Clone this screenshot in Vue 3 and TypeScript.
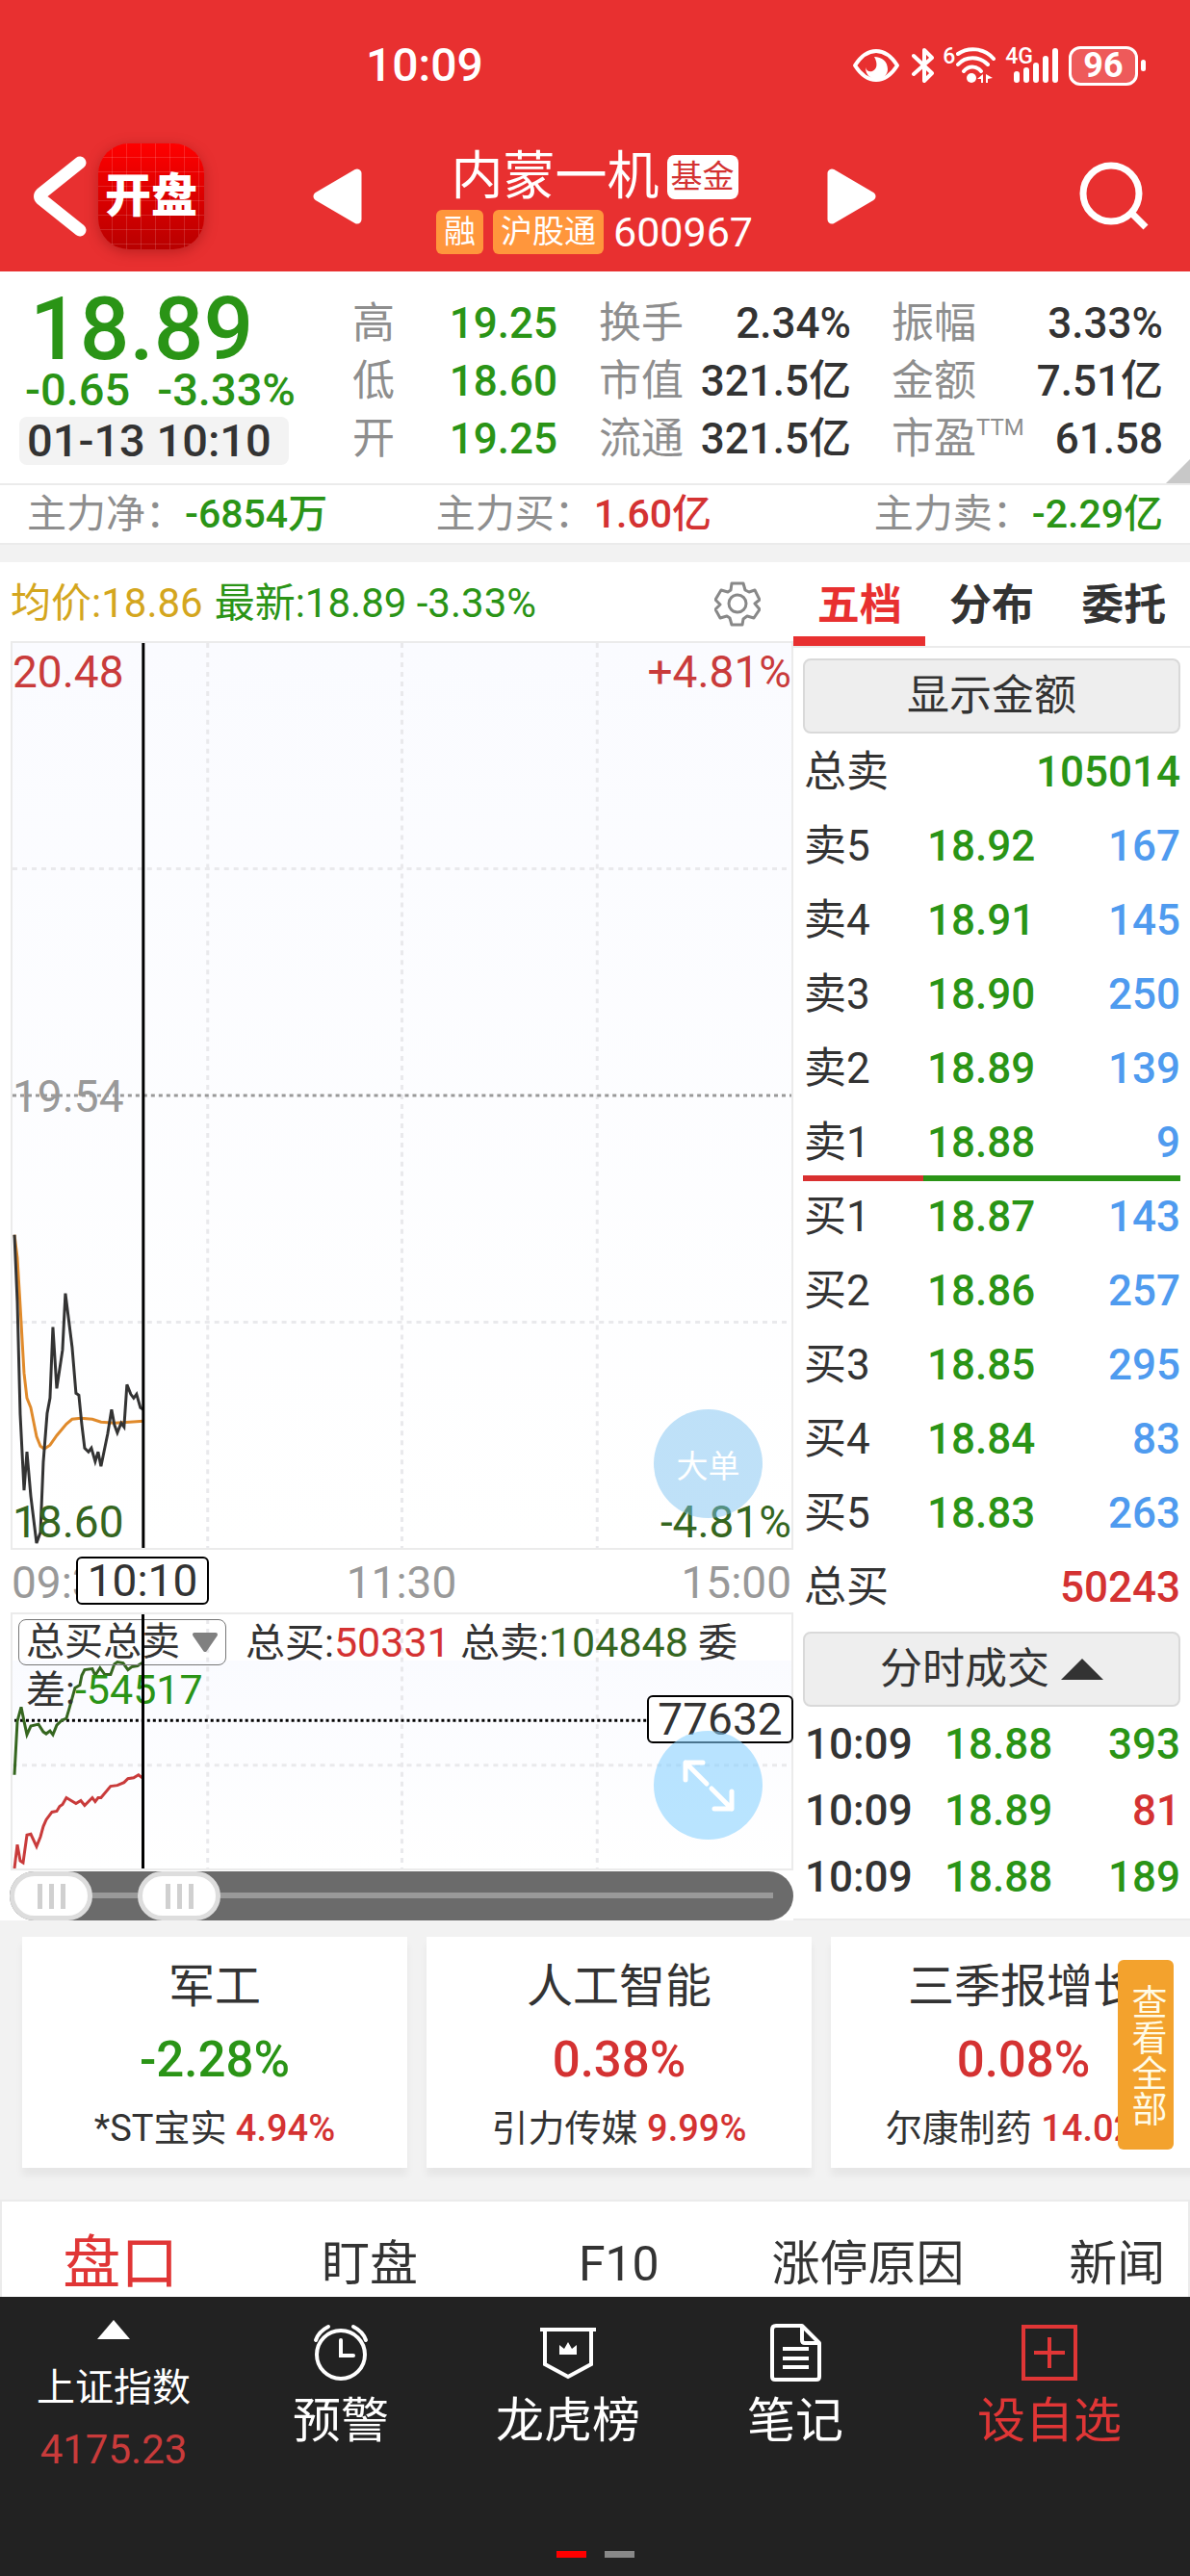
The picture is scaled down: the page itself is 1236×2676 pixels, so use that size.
<script setup lang="ts">
import { ref } from 'vue'

type Tone = 'up' | 'down' | 'blue' | 'dark'
interface Level { name: string; price: string; qty: string }
interface Trade { time: string; price: string; qty: string; tone: Tone }
interface Sector { name: string; change: string; tone: Tone; stock: string; stockChange: string }

const sells: Level[] = [
  { name: '卖5', price: '18.92', qty: '167' },
  { name: '卖4', price: '18.91', qty: '145' },
  { name: '卖3', price: '18.90', qty: '250' },
  { name: '卖2', price: '18.89', qty: '139' },
  { name: '卖1', price: '18.88', qty: '9' },
]
const buys: Level[] = [
  { name: '买1', price: '18.87', qty: '143' },
  { name: '买2', price: '18.86', qty: '257' },
  { name: '买3', price: '18.85', qty: '295' },
  { name: '买4', price: '18.84', qty: '83' },
  { name: '买5', price: '18.83', qty: '263' },
]
const trades: Trade[] = [
  { time: '10:09', price: '18.88', qty: '393', tone: 'down' },
  { time: '10:09', price: '18.89', qty: '81', tone: 'up' },
  { time: '10:09', price: '18.88', qty: '189', tone: 'down' },
]
const sectors: Sector[] = [
  { name: '军工', change: '-2.28%', tone: 'down', stock: '*ST宝实', stockChange: '4.94%' },
  { name: '人工智能', change: '0.38%', tone: 'up', stock: '引力传媒', stockChange: '9.99%' },
  { name: '三季报增长', change: '0.08%', tone: 'up', stock: '尔康制药', stockChange: '14.02%' },
]
const bookTabs = ['五档', '分布', '委托']
const activeBook = ref('五档')
const infoTabs = ['盘口', '盯盘', 'F10', '涨停原因', '新闻']
const activeInfo = ref('盘口')
const rangeStart = ref(0)
const rangeEnd = ref(44)

const priceLine =
  '2,616 5,686 8,803 12,882 15,842 19,888 25,937 29,926 32,853 36,802 39,786 42,712 46,776 52,736 55,677 62,733 66,781 69,783 72,813 75,838 79,842 82,838 86,852 89,842 92,857 99,823 103,798 106,814 109,822 113,812 116,816 119,772 123,782 126,786 129,782 133,796 136,798'
const averageLine =
  '2,616 5,640 8,690 12,760 15,786 19,796 25,826 29,836 33,839 39,835 46,825 56,813 62,808 71,807 83,808 92,811 106,812 122,811 136,810'
const askLine =
  '2,168 5,112 9,97 12,112 15,126 19,117 27,115 32,123 35,125 39,122 42,126 46,116 51,111 56,109 60,95 65,77 70,74 72,64 75,58 83,57 86,64 91,56 96,63 102,63 106,52 109,50 115,51 120,58 124,55 130,54 136,50'
const bidLine =
  '2,266 5,241 8,258 11,260 15,231 19,230 25,243 29,233 32,222 35,215 41,207 46,206 49,201 52,199 56,192 66,198 71,195 75,200 83,192 86,196 89,192 92,192 102,180 109,179 116,176 120,172 126,171 131,168 136,172'
</script>

<template>
  <div class="page">
    <header class="top">
      <div class="status">
        <time class="clock">10:09</time>
        <div class="status-icons">
          <svg class="eye" viewBox="0 0 50 36" width="50" height="36" aria-hidden="true">
            <path d="M3 18C10 7 17 3 25 3s15 4 22 15C40 29 33 33 25 33S10 29 3 18z" fill="none" stroke="#fff" stroke-width="4" stroke-linejoin="round" />
            <path d="M23 9c8 0 14 5 14 13 0 6-5 10-11 10-7 0-12-4-12-12 1 4 4 5 7 4 5-2 6-8 2-15z" fill="#fff" />
          </svg>
          <svg class="bt" viewBox="0 0 24 38" width="24" height="38" aria-hidden="true">
            <path d="M2 9l19 18-8 8V3l8 8L2 28" fill="none" stroke="#fff" stroke-width="4" stroke-linejoin="round" stroke-linecap="round" />
          </svg>
          <span class="net">6</span>
          <svg class="wifi" viewBox="0 0 42 38" width="42" height="38" aria-hidden="true">
            <g fill="none" stroke="#fff" stroke-width="4" stroke-linecap="round">
              <path d="M3 7c10-7 27-7 37 5" />
              <path d="M3 18c8-9 22-9 31 0" />
              <path d="M9 25c5-6 13-6 18 0" />
            </g>
            <circle cx="17" cy="32" r="5" fill="#fff" />
            <path d="M23 33l6-5v9h-2v-4zM32 28l7 4-5 1v4h-2z" fill="#fff" />
          </svg>
          <span class="net four">4G</span>
          <svg class="bars" viewBox="0 0 50 38" width="50" height="38" aria-hidden="true">
            <path d="M5 28v6M15 24v10M25 19v15M35 12v22M45 4v30" stroke="#fff" stroke-width="6" stroke-linecap="round" />
          </svg>
          <span class="battery">96</span>
          <i class="nub"></i>
        </div>
      </div>
      <div class="nav">
        <button class="plain back" aria-label="返回">
          <svg viewBox="0 0 56 84" width="56" height="84"><path d="M49 7L9 39q-3 3 0 6l40 32" fill="none" stroke="#fff" stroke-width="13" stroke-linecap="round" stroke-linejoin="round" /></svg>
        </button>
        <div class="logo">开盘</div>
        <button class="plain prev" aria-label="上一只">
          <svg viewBox="0 0 52 58" width="52" height="58"><path d="M46 5v48L5 29z" fill="#fff" stroke="#fff" stroke-width="9" stroke-linejoin="round" /></svg>
        </button>
        <div class="title">
          <h1>内蒙一机<span class="fund">基金</span></h1>
          <p><span class="tag">融</span><span class="tag">沪股通</span><span class="code">600967</span></p>
        </div>
        <button class="plain next" aria-label="下一只">
          <svg viewBox="0 0 52 58" width="52" height="58"><path d="M6 5v48l41-24z" fill="#fff" stroke="#fff" stroke-width="9" stroke-linejoin="round" /></svg>
        </button>
        <button class="plain search" aria-label="搜索">
          <svg viewBox="0 0 74 74" width="74" height="74"><circle cx="34" cy="34" r="29" fill="none" stroke="#fff" stroke-width="7" /><path d="M56 55l14 14" stroke="#fff" stroke-width="7" /></svg>
        </button>
      </div>
    </header>

    <section class="quote">
      <div class="last">
        <div class="big">18.89</div>
        <div class="delta"><span>-0.65</span><span>-3.33%</span></div>
        <div class="stamp">01-13 10:10</div>
      </div>
      <dl class="c1">
        <div><dt>高</dt><dd class="down">19.25</dd></div>
        <div><dt>低</dt><dd class="down">18.60</dd></div>
        <div><dt>开</dt><dd class="down">19.25</dd></div>
      </dl>
      <dl class="c2">
        <div><dt>换手</dt><dd>2.34%</dd></div>
        <div><dt>市值</dt><dd>321.5亿</dd></div>
        <div><dt>流通</dt><dd>321.5亿</dd></div>
      </dl>
      <dl class="c3">
        <div><dt>振幅</dt><dd>3.33%</dd></div>
        <div><dt>金额</dt><dd>7.51亿</dd></div>
        <div><dt class="pe">市盈<small>TTM</small></dt><dd>61.58</dd></div>
      </dl>
    </section>

    <section class="flow">
      <p><span>主力净：</span><b class="down">-6854万</b></p>
      <p><span>主力买：</span><b class="up">1.60亿</b></p>
      <p><span>主力卖：</span><b class="down">-2.29亿</b></p>
    </section>

    <main class="main">
      <section class="left">
        <div class="legend">
          <span class="avg">均价:18.86</span>
          <span class="new">最新:18.89 -3.33%</span>
          <button class="plain gear" aria-label="设置">
            <svg viewBox="0 0 48 48" width="48" height="48" fill="none" stroke="#888" stroke-width="3" stroke-linejoin="round">
              <path d="M18 3h12l2 7 4 2 6-2 5 10-5 4 5 6-6 9-7-2-4 3-1 6H18l-2-7-3-2-7 2-5-9 5-5-5-5 6-10 7 2 3-2z" />
              <circle cx="24" cy="24" r="9" />
            </svg>
          </button>
        </div>

        <div class="chart">
          <svg viewBox="0 0 810 942" preserveAspectRatio="none">
            <g stroke="#e9e9ec" stroke-width="3" stroke-dasharray="5 5">
              <path d="M203 0v942M405 0v942M608 0v942M0 235h810M0 707h810" />
            </g>
            <path d="M0 471h810" stroke="#999" stroke-width="3" stroke-dasharray="4 4" />
            <polyline :points="averageLine" fill="none" stroke="#e08a2b" stroke-width="3" />
            <polyline :points="priceLine" fill="none" stroke="#333" stroke-width="3" />
            <path d="M136 0v942" stroke="#000" stroke-width="3" />
          </svg>
          <span class="lab tl">20.48</span>
          <span class="lab tr">+4.81%</span>
          <span class="lab ml">19.54</span>
          <span class="lab bl">18.60</span>
          <span class="lab br">-4.81%</span>
          <button class="bubble big-order">大单</button>
        </div>

        <div class="axis">
          <span>09:30</span><span>11:30</span><span>15:00</span>
          <span class="cursor">10:10</span>
        </div>

        <div class="chart volume">
          <svg viewBox="0 0 810 266" preserveAspectRatio="none">
            <g stroke="#e9e9ec" stroke-width="3" stroke-dasharray="5 5">
              <path d="M203 5v261M405 5v261M608 5v261M0 158h810" />
            </g>
            <path d="M2 111h657" stroke="#000" stroke-width="3" stroke-dasharray="3 3" />
            <polyline :points="askLine" fill="none" stroke="#35661f" stroke-width="3" />
            <polyline :points="bidLine" fill="none" stroke="#c93b3b" stroke-width="3" />
          </svg>
          <div class="stats">
            <button class="picker">总买总卖<svg viewBox="0 0 28 22" width="28" height="22"><path d="M3 3h22L14 19z" fill="#808080" stroke="#808080" stroke-width="4" stroke-linejoin="round" /></svg></button>
            <span>总买:<em class="up">50331</em> 总卖:<em class="deep">104848</em> 委</span>
            <div class="diff">差:<em class="down">-54517</em></div>
          </div>
          <i class="cross"></i>
          <span class="value">77632</span>
          <button class="bubble expand" aria-label="展开">
            <svg viewBox="0 0 56 56" width="56" height="56" fill="none" stroke="#fff" stroke-width="5" stroke-linecap="round" stroke-linejoin="round">
              <path d="M26 26L4 4M4 22V4h18M31 31l21 21M52 34v18H34" />
            </svg>
          </button>
        </div>

        <div class="slider">
          <input v-model.number="rangeStart" type="range" min="0" max="240" aria-label="开始时间" />
          <input v-model.number="rangeEnd" type="range" min="0" max="240" aria-label="结束时间" />
        </div>
      </section>

      <section class="book">
        <nav class="book-tabs">
          <button v-for="t in bookTabs" :key="t" class="plain" :class="{ on: t === activeBook }" @click="activeBook = t">{{ t }}</button>
        </nav>
        <div class="book-body">
          <button class="grey">显示金额</button>
          <table>
            <colgroup><col class="col-name" /><col /><col class="col-qty" /></colgroup>
            <tbody>
              <tr><th>总卖</th><td colspan="2" class="down">105014</td></tr>
              <tr v-for="l in sells" :key="l.name"><th>{{ l.name }}</th><td class="down price">{{ l.price }}</td><td class="blue">{{ l.qty }}</td></tr>
            </tbody>
          </table>
          <div class="ratio"></div>
          <table>
            <colgroup><col class="col-name" /><col /><col class="col-qty" /></colgroup>
            <tbody>
              <tr v-for="l in buys" :key="l.name"><th>{{ l.name }}</th><td class="down price">{{ l.price }}</td><td class="blue">{{ l.qty }}</td></tr>
              <tr><th>总买</th><td colspan="2" class="up">50243</td></tr>
            </tbody>
          </table>
          <button class="grey ticks">分时成交<svg viewBox="0 0 44 22" width="44" height="22"><path d="M22 0l22 22H0z" fill="#333" /></svg></button>
          <table class="trades">
            <tbody>
              <tr v-for="(t, i) in trades" :key="i"><td class="time">{{ t.time }}</td><td class="down price">{{ t.price }}</td><td :class="t.tone">{{ t.qty }}</td></tr>
            </tbody>
          </table>
        </div>
      </section>
    </main>

    <section class="sectors">
      <article v-for="s in sectors" :key="s.name" class="card">
        <h2>{{ s.name }}</h2>
        <strong :class="s.tone">{{ s.change }}</strong>
        <p>{{ s.stock }} <b class="up">{{ s.stockChange }}</b></p>
      </article>
      <button class="all">查看全部</button>
    </section>

    <nav class="info-tabs">
      <button v-for="t in infoTabs" :key="t" class="plain" :class="{ on: t === activeInfo }" @click="activeInfo = t">{{ t }}</button>
    </nav>

    <footer class="bottom">
      <div class="tools">
        <button class="plain index">
          <svg viewBox="0 0 34 20" width="34" height="20"><path d="M17 0l17 20H0z" fill="#fff" /></svg>
          <span>上证指数</span>
          <span class="points">4175.23</span>
        </button>
        <button class="plain tool">
          <svg viewBox="0 0 60 60" width="60" height="60" fill="none" stroke="#fff" stroke-width="4" stroke-linecap="round">
            <circle cx="30" cy="32" r="25" /><path d="M30 17v16h13" /><path d="M4 17c2-6 7-11 13-14M56 17c-2-6-7-11-13-14" />
          </svg>
          <span>预警</span>
        </button>
        <button class="plain tool">
          <svg viewBox="0 0 60 60" width="60" height="60" fill="none" stroke="#fff" stroke-width="4">
            <path d="M1 6h58M6 6v36l24 13 24-13V6" /><path d="M21 32V22l5 4 4-7 4 7 5-4v10z" fill="#fff" stroke="none" />
          </svg>
          <span>龙虎榜</span>
        </button>
        <button class="plain tool">
          <svg viewBox="0 0 60 60" width="60" height="60" fill="none" stroke="#fff" stroke-width="4" stroke-linejoin="round">
            <path d="M10 2h27l18 18v35q0 3-3 3H9q-3 0-3-3V6q0-4 4-4z" /><path d="M37 3v14q0 3 3 3h14M17 26h27M17 36h27M17 45h27" />
          </svg>
          <span>笔记</span>
        </button>
        <button class="plain tool add">
          <svg viewBox="0 0 60 60" width="60" height="60" fill="none" stroke="#e03636" stroke-width="4">
            <path d="M3 3h54v54H3zM14 30h32M30 14v32" />
          </svg>
          <span>设自选</span>
        </button>
      </div>
      <div class="dots"><i class="on"></i><i></i></div>
    </footer>
  </div>
</template>

<style>
html,
body {
  background: #222;
}
</style>

<style scoped>
.page {
  overflow: hidden;
  background: #fff;
  color: #333;
  font-family: Roboto, "Noto Sans CJK SC", sans-serif;
  font-size: 44px;
  line-height: 60px;
}
.page *,
.page *::before,
.page *::after {
  box-sizing: border-box;
}
button {
  font-family: inherit;
  color: inherit;
  cursor: pointer;
}
.plain {
  padding: 0;
  border: 0;
  background: none;
  font-size: inherit;
  line-height: inherit;
}
svg {
  display: block;
}
h1, h2, p, dl, dd {
  margin: 0;
}
b, em, strong {
  font-weight: 500;
  font-style: normal;
}
.up { color: #d43232; }
.down { color: #2a9416; }
.deep { color: #35661f; }
.blue { color: #4f9bef; }

/* header */
.top {
  background: #e83030;
  color: #fff;
}
.status {
  display: flex;
  justify-content: space-between;
  align-items: center;
  padding: 38px 46px 0 380px;
}
.clock {
  font-size: 48px;
  font-weight: 500;
}
.status-icons {
  display: flex;
  align-items: center;
}
.bt { margin: 0 8px 0 12px; }
.net {
  align-self: flex-start;
  font-size: 23px;
  font-weight: 500;
  line-height: 22px;
}
.four { margin: 0 -22px 0 10px; }
.battery {
  width: 72px;
  margin-left: 9px;
  border: 3px solid #fff;
  border-radius: 12px;
  background: #ee5a5a;
  font-size: 36px;
  font-weight: 700;
  line-height: 35px;
  text-align: center;
}
.nub {
  width: 5px;
  height: 12px;
  margin-left: 3px;
  border-radius: 3px;
  background: #fff;
}
.nav {
  display: flex;
  align-items: center;
  padding: 45px 42px 17px 34px;
}
.logo {
  width: 110px;
  margin-left: 12px;
  border-radius: 32px;
  background:
    repeating-linear-gradient(90deg, transparent 0 14px, rgba(255, 255, 255, .14) 14px 15px),
    repeating-linear-gradient(transparent 0 14px, rgba(255, 255, 255, .14) 14px 15px),
    linear-gradient(#f00, #b80000);
  box-shadow: 0 3px 14px rgba(100, 0, 0, .35);
  font-size: 48px;
  font-weight: 900;
  line-height: 110px;
  text-align: center;
}
.prev { margin-left: 113px; }
.title {
  display: flex;
  flex-direction: column;
  align-items: center;
  flex: 1;
  padding-top: 8px;
}
.next { margin-right: 210px; }
.title h1 {
  display: flex;
  align-items: center;
  gap: 8px;
  font-size: 54px;
  font-weight: 400;
  line-height: 66px;
}
.fund {
  padding: 0 4px;
  border-radius: 8px;
  background: #fff;
  color: #d43232;
  font-size: 33px;
  line-height: 46px;
}
.title p {
  display: flex;
  align-items: center;
  line-height: 48px;
}
.tag {
  margin-right: 10px;
  padding: 0 8px;
  border-radius: 6px;
  background: #ff963c;
  font-size: 33px;
  line-height: 46px;
}
.code { font-size: 43px; }

/* quote */
.quote {
  position: relative;
  display: grid;
  grid-template-columns: 366fr 256fr 304fr 310fr;
  padding-bottom: 16px;
  border-bottom: 2px solid #ebebeb;
}
.quote::after {
  content: "";
  position: absolute;
  right: 0;
  bottom: 0;
  width: 25px;
  height: 25px;
  background: #c8c8c8;
  clip-path: polygon(100% 0, 100% 100%, 0 100%);
}
.last {
  padding: 18px 0 0 20px;
}
.big {
  padding-left: 11px;
  color: #2a9416;
  font-size: 91px;
  font-weight: 500;
  line-height: 84px;
}
.delta {
  display: flex;
  gap: 28px;
  padding-left: 6px;
  color: #2a9416;
  font-size: 47px;
  font-weight: 500;
  line-height: 42px;
}
.stamp {
  width: 280px;
  margin-top: 7px;
  padding-left: 8px;
  border-radius: 8px;
  background: #f3f3f3;
  font-size: 47px;
  font-weight: 500;
  line-height: 50px;
  white-space: nowrap;
}
.quote dl {
  padding-top: 24px;
}
.quote dl > div {
  display: flex;
  justify-content: space-between;
  line-height: 60px;
}
.c1 { padding-right: 43px; }
.c2 { padding-right: 42px; }
.c3 { padding-right: 28px; }
dt { color: #8e8e8e; }
.pe {
  display: flex;
}
.pe small {
  font-size: 24px;
  line-height: 36px;
}
dd { font-weight: 500; white-space: nowrap; }

.flow {
  display: grid;
  grid-template-columns: 36% 1fr auto;
  padding: 0 28px;
  border-bottom: 2px solid #ebebeb;
  font-size: 41px;
  line-height: 60px;
}
.flow span { color: #8e8e8e; }

/* main */
.main {
  display: grid;
  grid-template-columns: 2fr 1fr;
  border-top: 18px solid #f2f2f2;
}
.legend {
  display: flex;
  gap: 12px;
  align-items: center;
  height: 82px;
  padding: 4px 34px 0 11px;
  font-size: 42px;
}
.avg { color: #d4a61e; }
.new { color: #2a9416; }
.gear { margin-left: auto; }
.chart {
  position: relative;
  height: 944px;
  margin: 0 0 0 11px;
  border: 2px solid #ebebeb;
  background: linear-gradient(#fafbff, #fff);
}
.chart > svg {
  width: 100%;
  height: 100%;
}
.lab {
  position: absolute;
  font-size: 46px;
}
.tl, .tr { top: 0; color: #c93b3b; }
.ml { top: 441px; left: 0; color: #999; }
.tl, .bl { left: 0; }
.tr, .br { right: 0; }
.bl, .br { bottom: -3px; color: #35661f; }
.bubble {
  position: absolute;
  right: 30px;
  display: flex;
  align-items: center;
  justify-content: center;
  width: 113px;
  height: 113px;
  padding: 0;
  border: 0;
  border-radius: 50%;
  color: #fff;
  font-size: 33px;
}
.big-order {
  bottom: 31px;
  background: rgba(120, 192, 240, .47);
}
.expand {
  bottom: 30px;
  background: rgba(130, 206, 255, .56);
}
.axis {
  position: relative;
  display: flex;
  justify-content: space-between;
  padding: 3px 2px 0 12px;
  color: #999;
  font-size: 46px;
  line-height: 62px;
}
.cursor,
.value {
  position: absolute;
  border: 2px solid #000;
  border-radius: 6px;
  background: #fff;
  color: #333;
  font-size: 46px;
  line-height: 46px;
  text-align: center;
}
.cursor {
  top: 7px;
  left: 79px;
  width: 138px;
}
.volume {
  height: 268px;
  background: linear-gradient(#fff 48px, #fafbff 48px, #fff);
}
.stats {
  position: absolute;
  top: 5px;
  left: 6px;
  right: 0;
  font-size: 41px;
  line-height: 48px;
  white-space: nowrap;
}
.stats em {
  font-size: 43px;
  font-weight: 400;
}
.picker {
  display: inline-flex;
  align-items: center;
  gap: 12px;
  margin-right: 20px;
  padding: 0 7px;
  border: 1px solid #777;
  border-radius: 8px;
  background: none;
  font-size: 40px;
  line-height: 46px;
  vertical-align: top;
}
.diff { padding-left: 8px; }
.cross {
  position: absolute;
  top: 0;
  bottom: 0;
  left: 134px;
  width: 3px;
  background: #000;
}
.value {
  top: 84px;
  right: -2px;
  width: 152px;
}
.slider {
  position: relative;
  height: 51px;
  margin: 1px 0 0 10px;
  border-radius: 26px;
  background: linear-gradient(#999, #999) 40px 22px / calc(100% - 61px) 6px no-repeat #6b6b6b;
}
.slider input {
  position: absolute;
  inset: 0;
  width: 100%;
  height: 51px;
  margin: 0;
  appearance: none;
  background: none;
  pointer-events: none;
}
.slider input::-webkit-slider-thumb {
  appearance: none;
  width: 86px;
  height: 51px;
  border: 5px solid #ddd;
  border-radius: 26px;
  background:
    linear-gradient(#d0d0d0, #d0d0d0) 24px 50% / 5px 26px no-repeat,
    linear-gradient(#d0d0d0, #d0d0d0) 36px 50% / 5px 26px no-repeat,
    linear-gradient(#d0d0d0, #d0d0d0) 48px 50% / 5px 26px no-repeat,
    #fff;
  pointer-events: auto;
}

/* order book */
.book {
  border-bottom: 2px solid #ebebeb;
}
.book-tabs {
  display: grid;
  grid-template-columns: repeat(3, 1fr);
  border-bottom: 2px solid #ebebeb;
}
.book-tabs button {
  padding-top: 14px;
  border-bottom: 10px solid transparent;
  font-weight: 700;
  line-height: 63px;
}
.book-tabs .on {
  border-color: #e83030;
  color: #e83030;
}
.book-body {
  padding: 11px 10px 0;
}
.grey {
  display: flex;
  align-items: center;
  justify-content: center;
  gap: 12px;
  width: 100%;
  padding: 0;
  border: 2px solid #d9d9d9;
  border-radius: 8px;
  background: #eee;
  font-size: 44px;
  line-height: 74px;
}
.ticks { margin: 9px 0 3px; }
table {
  width: 100%;
  border-collapse: collapse;
  table-layout: fixed;
}
th, td {
  height: 77px;
  padding: 2px 0 0;
  text-align: right;
  font-weight: 500;
}
.col-name { width: 129px; }
.col-qty { width: 110px; }
th {
  padding-left: 1px;
  text-align: left;
  font-weight: 400;
}
.price, .time {
  text-align: left;
}
.ratio {
  position: relative;
  height: 6px;
  margin: -3px 0;
  background: linear-gradient(90deg, #d93030 32%, #2a9416 32%);
}
.trades td { height: 69px; }
.trades .time { width: 147px; padding-left: 2px; }

/* sectors */
.sectors {
  position: relative;
  display: flex;
  gap: 20px;
  padding: 17px 0 33px 23px;
  background: #f2f2f2;
}
.card {
  flex: 0 0 400px;
  padding: 18px 0 12px;
  background: #fff;
  box-shadow: 0 8px 8px rgba(0, 0, 0, .05);
  text-align: center;
}
.card h2 {
  font-size: 48px;
  font-weight: 400;
  line-height: 68px;
}
.card strong {
  display: block;
  font-size: 51px;
  line-height: 84px;
}
.card p {
  font-size: 38px;
  line-height: 58px;
  white-space: nowrap;
}
.all {
  position: absolute;
  top: 41px;
  right: 17px;
  width: 58px;
  height: 197px;
  padding: 0;
  border: 0;
  border-radius: 6px;
  background: #f3a22d;
  color: #fffbe6;
  font-size: 37px;
  line-height: 58px;
  writing-mode: vertical-rl;
}
.info-tabs {
  display: grid;
  grid-template-columns: repeat(5, 21%);
  align-items: center;
  height: 101px;
  padding-top: 30px;
  border: solid #ebebeb;
  border-width: 2px 2px 0;
  font-size: 50px;
}
.info-tabs button { margin-left: -12px; }
.info-tabs .on {
  color: #e03636;
  font-size: 60px;
}

/* bottom bar */
.bottom {
  background: #222;
  color: #fff;
}
.tools {
  display: grid;
  grid-template-columns: 236fr 236fr 236fr 236fr 292fr;
  padding-top: 24px;
}
.index, .tool {
  display: flex;
  flex-direction: column;
  align-items: center;
}
.index {
  font-size: 40px;
}
.index span { line-height: 64px; }
.index svg { margin-bottom: 19px; }
.index .points {
  color: #c93b3b;
  font-size: 42px;
}
.tool {
  padding-top: 4px;
  font-size: 50px;
}
.tool span { margin-top: 11px; }
.add { color: #e03636; }
.dots {
  display: flex;
  justify-content: center;
  gap: 19px;
  padding: 73px 0 20px;
}
.dots i {
  width: 31px;
  height: 7px;
  background: #888;
}
.dots .on { background: #f00; }
</style>
